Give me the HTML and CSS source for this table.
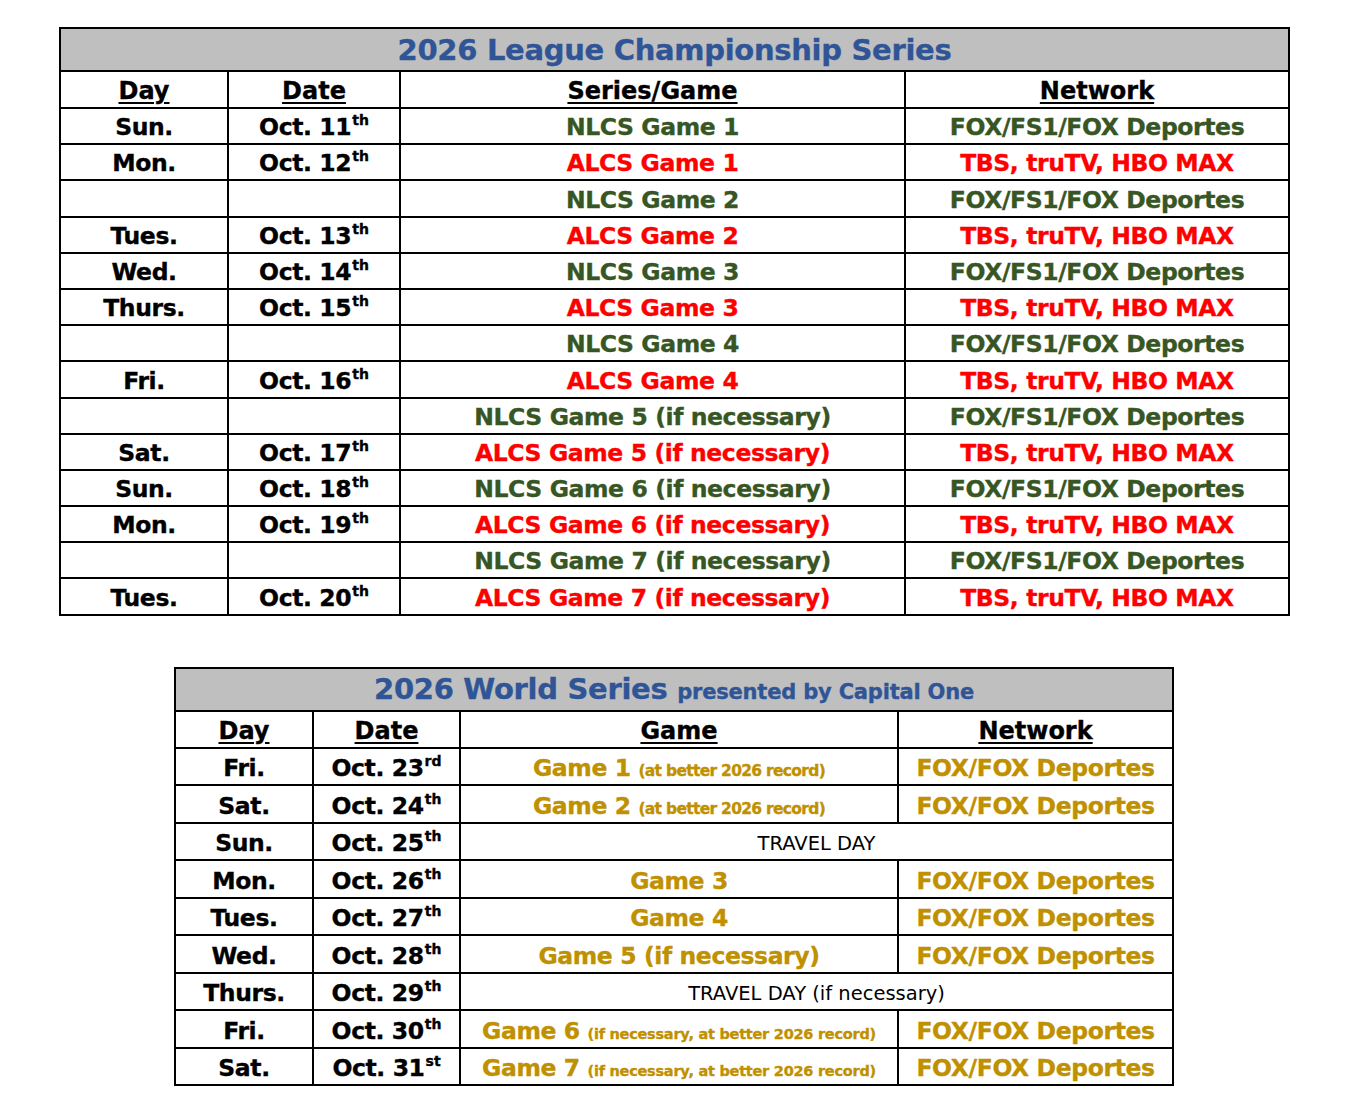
FILE: index.html
```html
<!DOCTYPE html>
<html lang="en">
<head>
<meta charset="utf-8">
<title>2026 Postseason Broadcast Schedule</title>
<link rel="stylesheet" href="styles.css">
</head>
<body>
<div class="page">
  <table class="sched lcs">
    <colgroup>
      <col class="c-day1"><col class="c-date1"><col class="c-game1"><col class="c-net1">
    </colgroup>
    <tr class="title-row"><td colspan="4" class="title">2026 League Championship Series</td></tr>
    <tr class="head-row"><th>Day</th><th>Date</th><th>Series/Game</th><th>Network</th></tr>
    <tr><td>Sun.</td><td>Oct. 11<sup>th</sup></td><td class="nl">NLCS Game 1</td><td class="nl">FOX/FS1/FOX Deportes</td></tr>
    <tr><td>Mon.</td><td>Oct. 12<sup>th</sup></td><td class="al">ALCS Game 1</td><td class="al">TBS, truTV, HBO MAX</td></tr>
    <tr><td></td><td></td><td class="nl">NLCS Game 2</td><td class="nl">FOX/FS1/FOX Deportes</td></tr>
    <tr><td>Tues.</td><td>Oct. 13<sup>th</sup></td><td class="al">ALCS Game 2</td><td class="al">TBS, truTV, HBO MAX</td></tr>
    <tr><td>Wed.</td><td>Oct. 14<sup>th</sup></td><td class="nl">NLCS Game 3</td><td class="nl">FOX/FS1/FOX Deportes</td></tr>
    <tr><td>Thurs.</td><td>Oct. 15<sup>th</sup></td><td class="al">ALCS Game 3</td><td class="al">TBS, truTV, HBO MAX</td></tr>
    <tr><td></td><td></td><td class="nl">NLCS Game 4</td><td class="nl">FOX/FS1/FOX Deportes</td></tr>
    <tr><td>Fri.</td><td>Oct. 16<sup>th</sup></td><td class="al">ALCS Game 4</td><td class="al">TBS, truTV, HBO MAX</td></tr>
    <tr><td></td><td></td><td class="nl">NLCS Game 5 (if necessary)</td><td class="nl">FOX/FS1/FOX Deportes</td></tr>
    <tr><td>Sat.</td><td>Oct. 17<sup>th</sup></td><td class="al">ALCS Game 5 (if necessary)</td><td class="al">TBS, truTV, HBO MAX</td></tr>
    <tr><td>Sun.</td><td>Oct. 18<sup>th</sup></td><td class="nl">NLCS Game 6 (if necessary)</td><td class="nl">FOX/FS1/FOX Deportes</td></tr>
    <tr><td>Mon.</td><td>Oct. 19<sup>th</sup></td><td class="al">ALCS Game 6 (if necessary)</td><td class="al">TBS, truTV, HBO MAX</td></tr>
    <tr><td></td><td></td><td class="nl">NLCS Game 7 (if necessary)</td><td class="nl">FOX/FS1/FOX Deportes</td></tr>
    <tr><td>Tues.</td><td>Oct. 20<sup>th</sup></td><td class="al">ALCS Game 7 (if necessary)</td><td class="al">TBS, truTV, HBO MAX</td></tr>
  </table>

  <table class="sched ws">
    <colgroup>
      <col class="c-day2"><col class="c-date2"><col class="c-game2"><col class="c-net2">
    </colgroup>
    <tr class="title-row"><td colspan="4" class="title">2026 World Series <span class="presented">presented by Capital One</span></td></tr>
    <tr class="head-row"><th>Day</th><th>Date</th><th>Game</th><th>Network</th></tr>
    <tr><td>Fri.</td><td>Oct. 23<sup>rd</sup></td><td class="ws-g">Game 1 <span class="note">(at better 2026 record)</span></td><td class="ws-g">FOX/FOX Deportes</td></tr>
    <tr><td>Sat.</td><td>Oct. 24<sup>th</sup></td><td class="ws-g">Game 2 <span class="note">(at better 2026 record)</span></td><td class="ws-g">FOX/FOX Deportes</td></tr>
    <tr><td>Sun.</td><td>Oct. 25<sup>th</sup></td><td colspan="2" class="travel">TRAVEL DAY</td></tr>
    <tr><td>Mon.</td><td>Oct. 26<sup>th</sup></td><td class="ws-g">Game 3</td><td class="ws-g">FOX/FOX Deportes</td></tr>
    <tr><td>Tues.</td><td>Oct. 27<sup>th</sup></td><td class="ws-g">Game 4</td><td class="ws-g">FOX/FOX Deportes</td></tr>
    <tr><td>Wed.</td><td>Oct. 28<sup>th</sup></td><td class="ws-g">Game 5 (if necessary)</td><td class="ws-g">FOX/FOX Deportes</td></tr>
    <tr><td>Thurs.</td><td>Oct. 29<sup>th</sup></td><td colspan="2" class="travel">TRAVEL DAY (if necessary)</td></tr>
    <tr><td>Fri.</td><td>Oct. 30<sup>th</sup></td><td class="ws-g">Game 6 <span class="note2">(if necessary, at better 2026 record)</span></td><td class="ws-g">FOX/FOX Deportes</td></tr>
    <tr><td>Sat.</td><td>Oct. 31<sup>st</sup></td><td class="ws-g">Game 7 <span class="note2">(if necessary, at better 2026 record)</span></td><td class="ws-g">FOX/FOX Deportes</td></tr>
  </table>
</div>
</body>
</html>
```

FILE: styles.css
```css
html, body {
  margin: 0;
  padding: 0;
  background: #ffffff;
}

body {
  font-family: "DejaVu Sans", "Verdana", sans-serif;
  color: #000000;
}

.page {
  padding: 27px 0 40px 0;
}

.sched {
  border-collapse: collapse;
  table-layout: fixed;
  border: 2px solid #000;
}

.sched td,
.sched th {
  border: 2px solid #000;
  padding: 0;
  text-align: center;
  vertical-align: bottom;
  font-weight: bold;
  font-size: 23.5px;
  line-height: 28px;
  padding-bottom: 2px;
  letter-spacing: -0.4px;
  -webkit-text-stroke: 0.35px currentColor;
  white-space: nowrap;
  overflow: hidden;
}

.sched th {
  text-decoration: underline;
  text-decoration-thickness: 2px;
  text-underline-offset: 3px;
  font-size: 24px;
  letter-spacing: 0;
}

.lcs {
  margin-left: 59px;
  width: 1229px;
}

.c-day1 { width: 168px; }
.c-date1 { width: 172px; }
.c-game1 { width: 505px; }
.c-net1 { width: 384px; }

.ws {
  margin-left: 174px;
  margin-top: 51px;
  width: 998px;
}

.c-day2 { width: 138px; }
.c-date2 { width: 147px; }
.c-game2 { width: 438px; }
.c-net2 { width: 275px; }

.sched tr { height: 36.2px; }
.ws tr { height: 37.5px; }
.sched tr.title-row { height: 43px; }
.sched tr.head-row { height: 37px; }

.sched td.title {
  background: #bfbfbf;
  color: #2f5597;
  font-size: 29px;
  line-height: 34px;
  letter-spacing: -0.3px;
  vertical-align: middle;
  padding-bottom: 0;
}

.presented {
  font-size: 21px;
  letter-spacing: -0.2px;
  line-height: 0;
}

sup {
  font-size: 14px;
  line-height: 0;
  vertical-align: 10px;
  margin-left: 1px;
  letter-spacing: 0;
}

.nl { color: #375623; }
.al { color: #ff0000; }
.ws-g { color: #bf9000; }

.note {
  font-size: 15.5px;
  letter-spacing: -0.7px;
  line-height: 0;
}

.note2 {
  font-size: 14.5px;
  letter-spacing: -0.25px;
  line-height: 0;
}

.sched td.travel {
  font-weight: normal;
  font-size: 19.5px;
  letter-spacing: 0;
  -webkit-text-stroke: 0;
  padding-bottom: 1px;
}
```
